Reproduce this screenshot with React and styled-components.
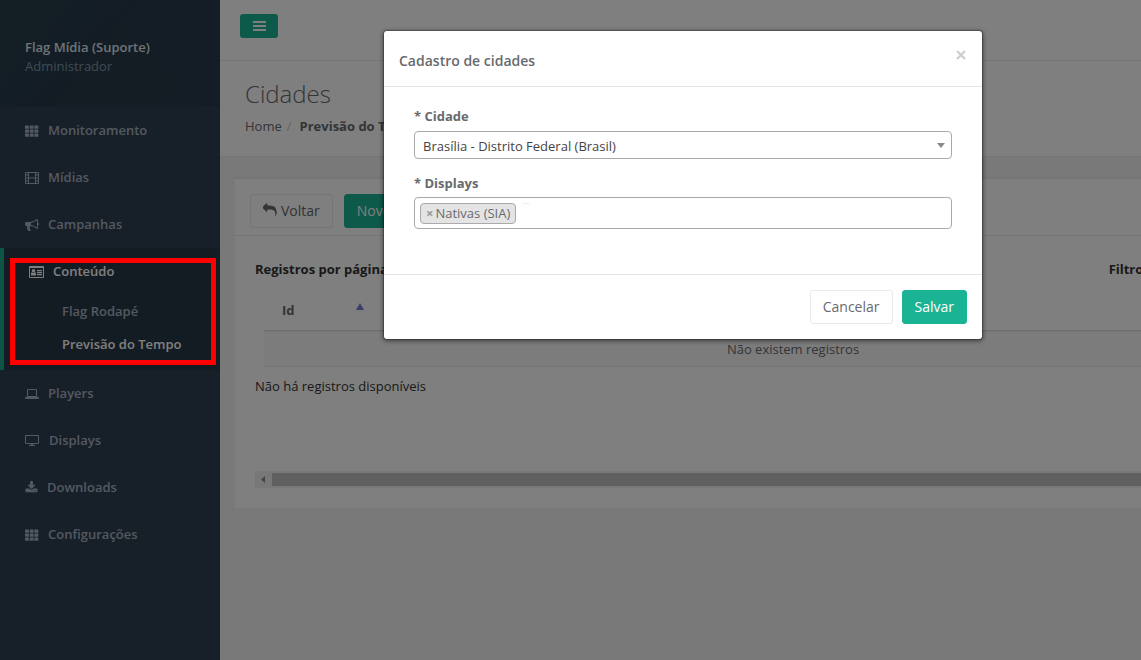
import React, { useState } from 'react';
import styled, { createGlobalStyle, css } from 'styled-components';

const GlobalStyle = createGlobalStyle`
  * {
    box-sizing: border-box;
  }

  body {
    margin: 0;
    overflow-x: hidden;
    background: #f3f3f4;
    color: #676a6c;
    font-family: 'Open Sans', 'Noto Sans', sans-serif;
    font-size: 13px;
    line-height: 19px;
  }

  button,
  input,
  select {
    font-family: inherit;
    font-size: inherit;
    line-height: inherit;
  }
`;

const StyledShell = styled.div`
  display: flex;
  position: relative;
  min-width: 1366px;
  min-height: 100vh;
`;

const StyledSidebar = styled.nav`
  flex: 0 0 220px;
  background: #2f4050;

  ul {
    margin: 0;
    padding: 0;
    list-style: none;
  }
`;

const StyledProfile = styled.div`
  height: 107px;
  padding: 38px 25px 0;
  background:
    linear-gradient(48deg, transparent 62%, rgba(40, 54, 76, 0.5) 62%),
    linear-gradient(130deg, #283c4a 20%, #26384a 45%, #273a46 46%, #293a4c 100%);
  color: #8095a8;

  strong {
    display: block;
    color: #dfe4ed;
    font-weight: 600;
  }
`;

const StyledNavLink = styled.a`
  display: flex;
  align-items: center;
  gap: 9px;
  padding: 14px 20px 14px 25px;
  color: ${({ $active }) => ($active ? '#fff' : '#a7b1c2')};
  font-weight: 600;
  text-decoration: none;

  svg {
    flex: none;
  }
`;

const StyledSubLink = styled(StyledNavLink)`
  padding: 7px 10px 7px 58px;
`;

const StyledNavItem = styled.li`
  ${({ $active }) =>
    $active &&
    css`
      position: relative;
      padding-bottom: 9px;
      border-left: 4px solid #19aa8d;
      background: #293846;
    `}
`;

const StyledHighlight = styled.div`
  position: absolute;
  inset: 10px 4px 5px 6px;
  z-index: 3;
  border: 5px solid #f00;
  pointer-events: none;
`;

const StyledMain = styled.main`
  flex: 1;
  min-width: 0;
`;

const StyledTopbar = styled.header`
  height: 61px;
  padding: 14px 20px;
  border-bottom: 1px solid #e7eaec;
  background: #fff;
`;

const StyledMenuButton = styled.button`
  display: flex;
  align-items: center;
  justify-content: center;
  width: 38px;
  height: 24px;
  padding: 0;
  border: 0;
  border-radius: 3px;
  background: #1ab394;
  color: #fff;
`;

const StyledHeading = styled.div`
  padding: 20px 25px;
  border-bottom: 1px solid #e7eaec;
  background: #fff;

  h2 {
    margin: 0 0 10px;
    font-size: 24px;
    font-weight: 300;
    line-height: 26px;
  }

  ol {
    display: flex;
    margin: 0;
    padding: 0;
    list-style: none;
  }

  li + li:before {
    content: '/';
    padding: 0 8px 0 5px;
    color: #ccc;
    font-weight: 400;
  }

  a {
    color: inherit;
    text-decoration: none;
  }
`;

const StyledPanel = styled.section`
  margin: 20px 15px;
  border-top: 2px solid #e7eaec;
  background: #fff;
`;

const StyledToolbar = styled.div`
  display: flex;
  gap: 11px;
  padding: 15px 15px 7px;
  border-bottom: 1px solid #e7eaec;
`;

const StyledButton = styled.button`
  display: inline-flex;
  align-items: center;
  gap: 4px;
  height: 34px;
  padding: 0 12px 2px;
  border: 1px solid ${({ $primary }) => ($primary ? '#1ab394' : '#e7eaec')};
  border-radius: 3px;
  background: ${({ $primary }) => ($primary ? '#1ab394' : '#fff')};
  color: ${({ $primary }) => ($primary ? '#fff' : 'inherit')};
  font-size: 14px;
`;

const StyledPanelBody = styled.div`
  padding: 24px 0 20px 20px;
`;

const StyledControls = styled.div`
  display: flex;
  justify-content: space-between;
  height: 30px;
  padding-right: 20px;
  color: #333;
  font-weight: 700;

  label {
    display: flex;
    align-items: flex-start;
    gap: 5px;
  }

  input {
    width: 179px;
    border: 1px solid #aaa;
  }
`;

const StyledTable = styled.table`
  width: calc(100% - 38px);
  margin: 0 29px 0 9px;
  border-collapse: separate;
  border-spacing: 0;
  table-layout: fixed;

  th {
    padding: 11px 18px 10px;
    border-bottom: 1px solid #ddd;
    text-align: left;
  }

  th:first-child {
    width: 118px;
  }

  th > span {
    display: flex;
    justify-content: space-between;
  }

  td {
    padding: 8px 8px 7px;
    border-top: 1px solid #e7eaec;
    border-bottom: 1px solid #e7eaec;
    background: #f9f9f9;
    text-align: center;
  }
`;

const StyledSortArrow = styled.i`
  width: 0;
  height: 0;
  margin-top: 2px;
  border: 4px solid transparent;
  border-top: 0;
  border-bottom: 7px solid #7a7ad8;
`;

const StyledInfo = styled.p`
  margin: 10px 0 75px;
  color: #333;
`;

const StyledScrollbar = styled.div`
  display: flex;
  align-items: center;
  height: 17px;
  background: #f1f1f1;

  svg {
    flex: 0 0 17px;
  }

  span {
    flex: 1;
    height: 13px;
    background: #c1c1c1;
  }
`;

const StyledBackdrop = styled.div`
  position: absolute;
  inset: 0;
  z-index: 2;
  padding: 30px 20px;
  background: rgba(0, 0, 0, 0.5);
`;

const StyledModal = styled.form`
  max-width: 600px;
  margin: 0 auto;
  border: 1px solid rgba(0, 0, 0, 0.2);
  border-radius: 4px;
  background: #fff;
  background-clip: padding-box;
  box-shadow: 0 1px 4px rgba(0, 0, 0, 0.5);
`;

const StyledModalHeader = styled.div`
  display: flex;
  align-items: flex-start;
  justify-content: space-between;
  padding: 15px;
  border-bottom: 1px solid #e5e5e5;

  h4 {
    margin: 5px 0 0;
    font-size: 14px;
    font-weight: 600;
    line-height: 20px;
  }

  button {
    display: flex;
    margin: 0;
    padding: 4px 1px;
    border: 0;
    background: none;
    color: #ccc;
  }
`;

const StyledModalBody = styled.div`
  display: grid;
  gap: 15px;
  padding: 20px 30px 45px;
`;

const StyledField = styled.div`
  display: grid;
  gap: ${({ $gap }) => $gap || 5}px;

  label {
    font-weight: 700;
  }
`;

const StyledSelect = styled.div`
  position: relative;

  select {
    display: block;
    width: 100%;
    height: 28px;
    padding: 2px 20px 0 8px;
    border: 1px solid #aaa;
    border-radius: 4px;
    appearance: none;
    background: #fff;
    color: #444;
  }

  &:after {
    content: '';
    position: absolute;
    top: 12px;
    right: 7px;
    border: 4px solid transparent;
    border-top: 5px solid #888;
    border-bottom: 0;
    pointer-events: none;
  }
`;

const StyledTagBox = styled.div`
  display: flex;
  gap: 5px;
  height: 32px;
  padding: 5px;
  border: 1px solid #aaa;
  border-radius: 4px;

  input {
    width: 10px;
    height: 20px;
    padding: 0;
    border: 0;
    border-top: 1px solid #eee;
    border-radius: 4px;
    outline: 0;
    background: none;
  }
`;

const StyledTag = styled.span`
  display: flex;
  align-items: center;
  gap: 2px;
  height: 21px;
  padding: 0 5px;
  border: 1px solid #aaa;
  border-radius: 4px;
  background: #e4e4e4;

  button {
    padding: 0;
    border: 0;
    background: none;
    color: #999;
    font-weight: 700;
  }
`;

const StyledModalFooter = styled.div`
  display: flex;
  justify-content: flex-end;
  gap: 9px;
  padding: 15px;
  border-top: 1px solid #e5e5e5;
`;

const Svg = ({ w = 14, h = 14, box, children }) => (
  <svg width={w} height={h} viewBox={box || `0 0 ${w} ${h}`} fill="currentColor" aria-hidden="true">
    {children}
  </svg>
);

const IconGrid = () => (
  <Svg w={14} h={12}>
    {[1, 5, 9].map(y =>
      [0, 4.7, 9.4].map(x => (
        <rect key={`${x}-${y}`} x={x} y={y - 0.5} width="3.9" height="3.2" rx="0.5" />
      )),
    )}
  </Svg>
);

const IconFilm = () => (
  <Svg w={14} h={14}>
    <path
      fillRule="evenodd"
      d="M1 1h12a1 1 0 0 1 1 1v10a1 1 0 0 1-1 1H1a1 1 0 0 1-1-1V2a1 1 0 0 1 1-1zM1 2v1.5h2V2zM1 4.5v2h2v-2zM1 7.5v2h2v-2zM1 10.500v1.500h2v-1.500zM11 2v1.500h2V2zM11 4.500v2h2v-2zM11 7.500v2h2v-2zM11 10.500v1.500h2v-1.500zM4 2v4.500h6V2zM4 7.500V12h6V7.500z"
    />
  </Svg>
);

const IconBullhorn = () => (
  <Svg w={14} h={14} box="0 0 1792 1792">
    <path d="M1664 640q53 0 90.5 37.5t37.5 90.5-37.5 90.5-90.5 37.5v384q0 52-38 90t-90 38q-417-347-812-380-58 19-91 66t-31 100.5 40 92.5q-20 33-23 65.5t6 58 33.5 55 48 50 61.5 50.5q-29 58-111.5 83t-168.5 11.5-132-55.5q-7-23-29.5-87.5t-32-94.5-23-89-15-101 3.5-98.5 22-110.5h-122q-66 0-113-47t-47-113v-192q0-66 47-113t113-47h480q435 0 896-384 52 0 90 38t38 90v384zm-128 604v-954q-394 302-768 343v270q377 42 768 341z" />
  </Svg>
);

const IconCard = () => (
  <Svg w={15} h={12}>
    <path
      fillRule="evenodd"
      d="M1 0h13a1 1 0 0 1 1 1v10a1 1 0 0 1-1 1H1a1 1 0 0 1-1-1V1a1 1 0 0 1 1-1zM1 2v9h13V2z"
    />
    <circle cx="4.500" cy="4.800" r="1.700" />
    <path d="M2 9.500V8q0-1.500 1-2 .7.900 1.500.9T6 6q1 .500 1 2v1.500zM8 4h5v1.300H8zM8 6h5v1.300H8zM8 8h5v1.300H8z" />
  </Svg>
);

const IconLaptop = () => (
  <Svg w={14} h={12}>
    <path
      fillRule="evenodd"
      d="M3 1h8a1 1 0 0 1 1 1v6a1 1 0 0 1-1 1H3a1 1 0 0 1-1-1V2a1 1 0 0 1 1-1zM3 2v6h8V2zM0 9h14v1q0 1-1.200 1H1.200Q0 11 0 10z"
    />
  </Svg>
);

const IconDesktop = () => (
  <Svg w={15} h={12}>
    <path
      fillRule="evenodd"
      d="M1 0h12a1 1 0 0 1 1 1v7a1 1 0 0 1-1 1H1a1 1 0 0 1-1-1V1a1 1 0 0 1 1-1zM1 1v7h12V1zM6 9h2v1h2v1H4v-1h2z"
    />
  </Svg>
);

const IconDownload = () => (
  <Svg w={13} h={13} box="0 0 1792 1792">
    <path d="M1344 1344q0-26-19-45t-45-19-45 19-19 45 19 45 45 19 45-19 19-45zm256 0q0-26-19-45t-45-19-45 19-19 45 19 45 45 19 45-19 19-45zm128-224v320q0 40-28 68t-68 28h-1472q-40 0-68-28t-28-68v-320q0-40 28-68t68-28h465l135 136q58 56 136 56t136-56l136-136h464q40 0 68 28t28 68zm-325-569q17 41-14 70l-448 448q-18 19-45 19t-45-19l-448-448q-31-29-14-70 17-39 59-39h256v-448q0-26 19-45t45-19h256q26 0 45 19t19 45v448h256q42 0 59 39z" />
  </Svg>
);

const IconReply = () => (
  <Svg w={14} h={14} box="0 0 1792 1792">
    <path d="M1792 1120q0 166-127 451-3 7-10.5 24t-13.5 30-13 22q-12 17-28 17-15 0-23.500-10t-8.500-25q0-9 2.500-26.500t2.500-23.500q5-68 5-123 0-112-19.500-200.500t-54-153.500-89-112-117-79.500-151-47-176.500-23.500-198.500-6h-224v256q0 26-19 45t-45 19-45-19l-512-512q-19-19-19-45t19-45l512-512q19-19 45-19t45 19 19 45v256h224q713 0 875 403 53 134 53 333z" />
  </Svg>
);

const IconBars = () => (
  <Svg w={13} h={10}>
    <path d="M0 0h13v2H0zM0 4h13v2H0zM0 8h13v2H0z" />
  </Svg>
);

const menu = [
  { label: 'Monitoramento', icon: IconGrid },
  { label: 'Mídias', icon: IconFilm },
  { label: 'Campanhas', icon: IconBullhorn },
  {
    label: 'Conteúdo',
    icon: IconCard,
    active: true,
    children: [{ label: 'Flag Rodapé' }, { label: 'Previsão do Tempo', active: true }],
  },
  { label: 'Players', icon: IconLaptop },
  { label: 'Displays', icon: IconDesktop },
  { label: 'Downloads', icon: IconDownload },
  { label: 'Configurações', icon: IconGrid },
];

const Sidebar = () => (
  <StyledSidebar>
    <StyledProfile>
      <strong>Flag Mídia (Suporte)</strong>
      Administrador
    </StyledProfile>
    <ul>
      {menu.map(({ label, icon: Icon, active, children }) => (
        <StyledNavItem key={label} $active={active}>
          <StyledNavLink href="#" $active={active}>
            <Icon />
            {label}
          </StyledNavLink>
          {children && (
            <ul>
              {children.map(child => (
                <li key={child.label}>
                  <StyledSubLink href="#" $active={child.active}>
                    {child.label}
                  </StyledSubLink>
                </li>
              ))}
            </ul>
          )}
          {active && <StyledHighlight />}
        </StyledNavItem>
      ))}
    </ul>
  </StyledSidebar>
);

const CityModal = ({ onClose }) => {
  const [displays, setDisplays] = useState(['Nativas (SIA)']);

  return (
    <StyledBackdrop>
      <StyledModal role="dialog" aria-labelledby="modal-title" onSubmit={e => e.preventDefault()}>
        <StyledModalHeader>
          <h4 id="modal-title">Cadastro de cidades</h4>
          <button type="button" aria-label="Fechar" onClick={onClose}>
            <Svg w={11} h={10}>
              <path d="M2 1l8 8M10 1l-8 8" stroke="currentColor" strokeWidth="2" />
            </Svg>
          </button>
        </StyledModalHeader>

        <StyledModalBody>
          <StyledField>
            <label htmlFor="cidade">* Cidade</label>
            <StyledSelect>
              <select id="cidade">
                <option>Brasília - Distrito Federal (Brasil)</option>
              </select>
            </StyledSelect>
          </StyledField>
          <StyledField $gap={4}>
            <label htmlFor="displays">* Displays</label>
            <StyledTagBox>
              {displays.map(name => (
                <StyledTag key={name}>
                  <button
                    type="button"
                    onClick={() => setDisplays(displays.filter(d => d !== name))}>
                    ×
                  </button>
                  {name}
                </StyledTag>
              ))}
              <input id="displays" type="text" />
            </StyledTagBox>
          </StyledField>
        </StyledModalBody>

        <StyledModalFooter>
          <StyledButton type="button" onClick={onClose}>
            Cancelar
          </StyledButton>
          <StyledButton type="submit" $primary>
            Salvar
          </StyledButton>
        </StyledModalFooter>
      </StyledModal>
    </StyledBackdrop>
  );
};

const App = () => {
  const [open, setOpen] = useState(true);

  return (
    <StyledShell>
      <GlobalStyle />
      <Sidebar />

      <StyledMain>
        <StyledTopbar>
          <StyledMenuButton type="button" aria-label="Menu">
            <IconBars />
          </StyledMenuButton>
        </StyledTopbar>

        <StyledHeading>
          <h2>Cidades</h2>
          <ol>
            <li>
              <a href="#">Home</a>
            </li>
            <li>
              <strong>Previsão do Tempo</strong>
            </li>
          </ol>
        </StyledHeading>

        <StyledPanel>
          <StyledToolbar>
            <StyledButton type="button">
              <IconReply />
              Voltar
            </StyledButton>
            <StyledButton type="button" $primary onClick={() => setOpen(true)}>
              Novo
            </StyledButton>
          </StyledToolbar>

          <StyledPanelBody>
            <StyledControls>
              <span>Registros por página</span>
              <label>
                Filtro:
                <input type="search" />
              </label>
            </StyledControls>

            <StyledTable>
              <thead>
                <tr>
                  <th>
                    <span>
                      Id
                      <StyledSortArrow />
                    </span>
                  </th>
                  <th />
                </tr>
              </thead>
              <tbody>
                <tr>
                  <td colSpan="2">Não existem registros</td>
                </tr>
              </tbody>
            </StyledTable>

            <StyledInfo>Não há registros disponíveis</StyledInfo>

            <StyledScrollbar>
              <Svg w={17} h={17}>
                <path d="M10 5v7L6 8.500z" fill="#888" />
              </Svg>
              <span />
            </StyledScrollbar>
          </StyledPanelBody>
        </StyledPanel>
      </StyledMain>

      {open && <CityModal onClose={() => setOpen(false)} />}
    </StyledShell>
  );
};

export default App;
